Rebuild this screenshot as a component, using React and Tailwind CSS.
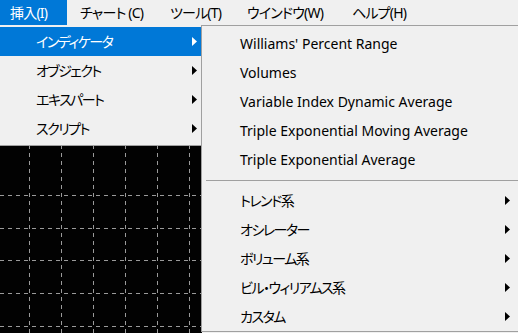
import React from 'react';

const font = "font-['Noto_Sans','Noto_Sans_CJK_JP',sans-serif] [font-feature-settings:'palt']";

function Arrow({ white }) {
    return (
        <svg width="5" height="9" viewBox="0 0 5 9" className="shrink-0">
            <path d="M0 0 L5 4.5 L0 9 Z" fill={white ? '#ffffff' : '#000000'} />
        </svg>
    );
}

function ChartGrid() {
    const xs = [29.5, 61.5, 93.5, 125.5, 157.5, 189.5];
    const ys = [170.5, 203.5, 235.5, 268.5, 301.5];
    return (
        <svg width="202" height="333" className="block">
            <rect width="202" height="333" fill="#020202" />
            {xs.map((x) => (
                <line key={x} x1={x} y1="0" x2={x} y2="333" stroke="#9a9a9a" strokeWidth="1" strokeDasharray="4 4" />
            ))}
            {ys.map((y) => (
                <line key={y} x1="0" y1={y} x2="202" y2={y} stroke="#9a9a9a" strokeWidth="1" strokeDasharray="4 4" />
            ))}
            <line x1="0" y1="317.5" x2="202" y2="317.5" stroke="#8a8a8a" strokeWidth="1" />
        </svg>
    );
}

export default function App() {
    const topItems = [
        { t: '挿入(I)', c: 'w-[67px]' },
        { t: 'チャート (C)', c: 'ml-[3px] w-[90px]' },
        { t: 'ツール(T)', c: 'w-[77px]' },
        { t: 'ウインドウ(W)', c: 'w-[105px]' },
        { t: 'ヘルプ(H)', c: 'w-[80px]' },
    ];
    const leftItems = ['インディケータ', 'オブジェクト', 'エキスパート', 'スクリプト'];
    const indicators = [
        "Williams' Percent Range",
        'Volumes',
        'Variable Index Dynamic Average',
        'Triple Exponential Moving Average',
        'Triple Exponential Average',
    ];
    const groups = ['トレンド系', 'オシレーター', 'ボリューム系', 'ビル・ウィリアムス系', 'カスタム'];

    return (
        <div className={`relative w-[518px] h-[333px] overflow-hidden bg-[#f0f0f0] text-[14px] text-black ${font}`}>
            {/* menu bar */}
            <div className="flex h-[25px] items-center bg-[#f0f0f0]">
                {topItems.map((m, i) => (
                    <div
                        key={m.t}
                        className={`h-[25px] shrink-0 flex items-center pl-[10px] tracking-[-0.8px] ${m.c} ${i === 0 ? 'bg-[#0078d7] text-white' : ''}`}
                    >
                        {m.t}
                    </div>
                ))}
            </div>

            <div className="flex">
                <ChartGrid />
            </div>

            {/* insert dropdown */}
            <div className="absolute left-0 top-[25px] w-[202px] bg-[#f0f0f0] pt-[2px] pb-[2px] border-b border-[#a0a0a0]">
                {leftItems.map((t, i) => (
                    <div
                        key={t}
                        className={`flex h-[29px] items-center justify-between pl-[36px] pr-[5px] ${i === 0 ? 'bg-[#0078d7] text-white' : ''}`}
                    >
                        <span className="tracking-[-1.5px]">{t}</span>
                        <Arrow white={i === 0} />
                    </div>
                ))}
            </div>

            {/* indicator submenu */}
            <div className="absolute left-[201px] top-[25px] w-[330px] h-[307px] bg-[#f0f0f0] border-l border-t border-b border-[#a0a0a0] pt-[3px]">
                {indicators.map((t) => (
                    <div key={t} className="flex h-[29px] items-center pl-[38px]">
                        {t}
                    </div>
                ))}
                <div className="flex h-[12px] items-center pl-[4px]">
                    <div className="h-px w-full bg-[#a0a0a0]" />
                </div>
                {groups.map((t) => (
                    <div key={t} className="flex h-[29px] items-center justify-between pl-[38px] pr-[21px]">
                        <span className="tracking-[-1.5px]">{t}</span>
                        <Arrow />
                    </div>
                ))}
            </div>
        </div>
    );
}
